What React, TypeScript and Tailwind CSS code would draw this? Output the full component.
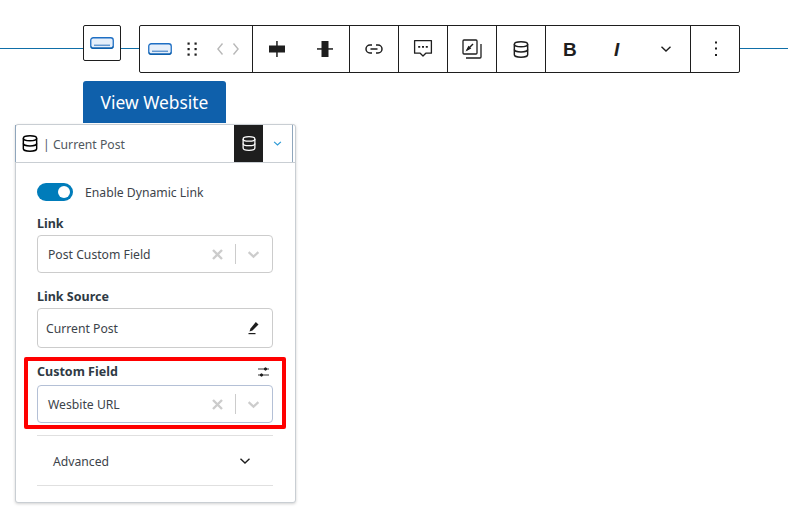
import React from 'react';

const Db = ({ size = 16, className = '' }: { size?: number; className?: string }) => (
  <svg width={size} height={size + 1} viewBox="1.3 0.2 15.4 17.6" fill="none" stroke="currentColor" strokeWidth="1.5" className={className}>
    <ellipse cx="9" cy="3.6" rx="6.9" ry="2.6" />
    <path d="M2.1 3.6v10.8c0 1.4 3.1 2.6 6.9 2.6s6.9-1.2 6.9-2.6V3.6" />
    <path d="M2.1 9c0 1.4 3.1 2.6 6.9 2.6s6.9-1.2 6.9-2.6" />
  </svg>
);

const ButtonIcon = () => (
  <svg width="24" height="12" viewBox="0 0 24 12" fill="none">
    <rect x="0.75" y="0.75" width="22.5" height="10.5" rx="2.5" fill="#e6effa" stroke="#1e6fc4" strokeWidth="1.3" />
    <path d="M1 9.6c0 1 .8 1.6 1.8 1.6h18.4c1 0 1.8-.6 1.8-1.6" stroke="#0f60ab" strokeWidth="1.5" />
    <path d="M4 8.2h16" stroke="#2a72bd" strokeWidth="1" />
  </svg>
);

const Chevron = ({ className = '', size = 12, weight = 1.6 }: { className?: string; size?: number; weight?: number }) => (
  <svg width={size} height={size} viewBox="0 0 12 12" fill="none" stroke="currentColor" strokeWidth={weight} className={className}>
    <path d="M1.5 3.8 6 8l4.5-4.2" />
  </svg>
);

const SelectBox = ({ label, border }: { label: string; border: string }) => (
  <div className={`flex items-center h-[38px] rounded-[4px] border ${border} pl-[10px] text-[12.2px] text-[#3c434a]`}>
    <span className="flex-1 pt-[3px]">{label}</span>
    <svg width="11" height="11" viewBox="0 0 11 11" stroke="#cccccc" strokeWidth="2.4" className="mr-[12px]">
      <path d="M1 1l9 9M10 1l-9 9" />
    </svg>
    <span className="w-px h-[20px] bg-[#cccccc]" />
    <Chevron className="text-[#cccccc] ml-[11px] mr-[12px]" size={13} weight={2} />
  </div>
);

const Group = ({ width, children }: { width: string; children: React.ReactNode }) => (
  <div className={`${width} h-full flex items-center justify-center border-r border-[#1e1e1e] last:border-r-0 shrink-0`}>
    {children}
  </div>
);

export default function App() {
  return (
    <div className="relative w-[788px] h-[521px] bg-white overflow-hidden pt-[25px] font-['Noto_Sans',sans-serif]">
      {/* line behind the toolbar */}
      <div className="absolute left-0 right-0 top-[48px] h-px bg-[#0f6fa8]" />

      <div className="relative flex items-start pl-[83px]">
        <div className="w-[38px] h-[36px] bg-white border border-[#1e1e1e] rounded-[2px] flex items-center justify-center">
          <ButtonIcon />
        </div>
        <div className="ml-[18px] w-[601px] h-[48px] bg-white border border-[#1e1e1e] rounded-[2px] flex items-center text-[#1e1e1e]">
          <Group width="w-[113px]">
            <div className="flex items-center w-full pl-[8px]">
              <ButtonIcon />
              <svg width="12" height="15" viewBox="0 0 12 15" fill="#1e1e1e" className="ml-[15px]">
                <rect x="0.5" y="0.5" width="2.2" height="2.2" />
                <rect x="7.5" y="0.5" width="2.2" height="2.2" />
                <rect x="0.5" y="6" width="2.2" height="2.2" />
                <rect x="7.5" y="6" width="2.2" height="2.2" />
                <rect x="0.5" y="11.5" width="2.2" height="2.2" />
                <rect x="7.5" y="11.5" width="2.2" height="2.2" />
              </svg>
              <svg width="22" height="14" viewBox="0 0 24 14" fill="none" stroke="#b8b8b8" strokeWidth="1.5" className="ml-[18px]">
                <path d="M6 1 1 7l5 6M18 1l5 6-5 6" />
              </svg>
            </div>
          </Group>
          <Group width="w-[97px]">
            <div className="flex items-center gap-[32px]">
              <svg width="16" height="16" viewBox="0 0 16 16" fill="#1e1e1e">
                <rect x="0" y="4.5" width="16" height="7" />
                <rect x="7.2" y="0" width="1.5" height="16" />
              </svg>
              <svg width="16" height="16" viewBox="0 0 16 16" fill="#1e1e1e">
                <rect x="4.5" y="0" width="7" height="16" />
                <rect x="0" y="7.2" width="16" height="1.5" />
              </svg>
            </div>
          </Group>
          <Group width="w-[49px]">
            <svg width="18" height="10" viewBox="0 0 18 10" fill="none" stroke="#1e1e1e" strokeWidth="1.5">
              <path d="M7 1H5a4 4 0 0 0 0 8h2M11 1h2a4 4 0 0 1 0 8h-2M5.5 5h7" />
            </svg>
          </Group>
          <Group width="w-[49px]">
            <svg width="20" height="20" viewBox="0 0 20 20" fill="none" stroke="#1e1e1e" strokeWidth="1.3">
              <path d="M1.6 1.6h16.8v12.6h-5.6L10 17l-2.8-2.8H1.6z" strokeLinejoin="round" />
              <path d="M5.2 7.9h2M9 7.9h2M12.8 7.9h2" strokeWidth="1.8" />
            </svg>
          </Group>
          <Group width="w-[49px]">
            <svg width="20" height="20" viewBox="0 0 20 20" fill="none" stroke="#1e1e1e" strokeWidth="1.3">
              <rect x="1" y="1" width="14" height="14" rx="1" />
              <path d="M19 5v13a1 1 0 0 1-1 1H4" />
              <path d="M5 11l6-6" strokeWidth="1.4" />
              <path d="M5 11l1.6-3.2L8.2 9.400z" fill="#1e1e1e" />
            </svg>
          </Group>
          <Group width="w-[49px]">
            <Db size={16} className="text-[#1e1e1e]" />
          </Group>
          <Group width="w-[145px]">
            <div className="flex items-center w-full pl-[17px]">
              <span className="w-[12px] text-[19px] font-bold leading-none font-['Liberation_Sans',sans-serif]">B</span>
              <span className="ml-[39px] w-[10px] text-[19px] italic font-bold leading-none font-['Liberation_Sans',sans-serif]">I</span>
              <Chevron className="ml-[36px]" size={12} weight={1.4} />
            </div>
          </Group>
          <Group width="w-[49px]">
            <svg width="4" height="16" viewBox="0 0 4 16" fill="#1e1e1e">
              <rect x="1" y="0.5" width="2" height="2" />
              <rect x="1" y="6.5" width="2" height="2" />
              <rect x="1" y="13" width="2" height="2" />
            </svg>
          </Group>
        </div>
      </div>

      <div className="relative mt-[8px]">
        <div className="ml-[83px] w-[143px] h-[42px] bg-[#0f60ab] rounded-t-[3px] flex items-center justify-center text-white text-[17.4px]">
          View Website
        </div>

        <div className="ml-[15px] mt-px w-[281px] bg-white rounded-[3px] border border-[#c9ced3] shadow-[0_1px_3px_rgba(0,0,0,0.18)]">
          <div className="h-[37px] -ml-px mr-[2px] flex items-stretch border-x border-[#8fa6bc] text-[12.2px] text-[#50575e]">
            <div className="flex-1 flex items-center pl-[6px]">
              <Db size={16} className="text-black" />
              <span className="ml-[5px] pt-[3px]">| Current Post</span>
            </div>
            <div className="w-[29px] bg-[#1e1e1e] flex items-center justify-center text-white">
              <Db size={14} />
            </div>
            <div className="w-[29px] flex items-center justify-center text-[#2f9bd6]">
              <Chevron size={9} />
            </div>
          </div>

          <div className="border-t border-[#c9ced3] pl-[21px] pr-[22px] pb-[16px]">
            <div className="flex items-center h-[18px] mt-[20px]">
              <div className="w-[36px] h-[18px] rounded-full bg-[#007cba] flex items-center justify-end pr-[3px]">
                <span className="w-[12px] h-[12px] rounded-full bg-white" />
              </div>
              <span className="ml-[12px] pt-[2px] text-[12.2px] text-[#3c434a]">Enable Dynamic Link</span>
            </div>

            <div className="mt-[14px] text-[12.5px] leading-[18px] font-bold text-[#2f3a44]">Link</div>
            <div className="mt-[2px]">
              <SelectBox label="Post Custom Field" border="border-[#cccccc]" />
            </div>

            <div className="mt-[15px] text-[12.5px] leading-[18px] font-bold text-[#2f3a44]">Link Source</div>
            <div className="mt-[2px] h-[40px] rounded-[4px] border border-[#cccccc] flex items-center pl-[8px] pr-[12px] text-[12.2px] text-[#3c434a]">
              <span className="flex-1 pt-[3px]">Current Post</span>
              <svg width="12" height="14" viewBox="0 0 12 14" fill="#1e1e1e">
                <path d="M7.800 1l2.700 2.500-6 6L1.500 10.500l1-3z" />
                <rect x="0.500" y="12" width="7" height="1.200" />
              </svg>
            </div>

            <div className="-mx-[13px] mt-[9px] h-[72px] border-[4px] border-[#ff0000] rounded-[2px] px-[9px]">
              <div className="flex items-center justify-between h-[18px] mt-[2px]">
                <span className="text-[12.5px] font-bold text-[#2f3a44]">Custom Field</span>
                <svg width="11" height="10" viewBox="0 0 11 10" fill="none" stroke="#1e1e1e" strokeWidth="0.9" className="mr-[4px]">
                  <path d="M0 2h11M0 8h11" />
                  <circle cx="7.500" cy="2" r="1.200" fill="#1e1e1e" />
                  <circle cx="3.500" cy="8" r="1.200" fill="#1e1e1e" />
                </svg>
              </div>
              <div className="mt-[4px]">
                <SelectBox label="Wesbite URL" border="border-[#b4c0d6]" />
              </div>
            </div>

            <div className="mt-[6px] h-[51px] border-y border-[#e0e0e0] flex items-center pl-[16px] pr-[22px] text-[12.2px] text-[#3c434a]">
              <span className="flex-1 pt-[3px]">Advanced</span>
              <Chevron className="text-[#1e1e1e]" size={12} weight={1.4} />
            </div>
          </div>
        </div>
      </div>
    </div>
  );
}
